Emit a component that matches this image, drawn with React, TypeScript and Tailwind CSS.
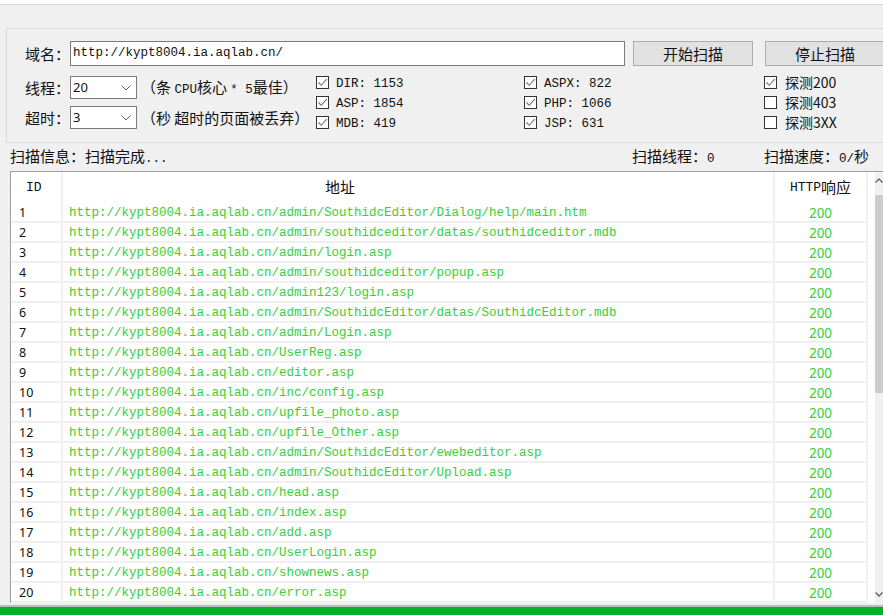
import React from "react";

const MONO = "font-['Liberation_Mono','Noto_Sans_CJK_SC',monospace]";
const CJK = "font-['Noto_Sans_CJK_SC','Noto_Sans',sans-serif]";

const urls = [
  "http://kypt8004.ia.aqlab.cn/admin/SouthidcEditor/Dialog/help/main.htm",
  "http://kypt8004.ia.aqlab.cn/admin/southidceditor/datas/southidceditor.mdb",
  "http://kypt8004.ia.aqlab.cn/admin/login.asp",
  "http://kypt8004.ia.aqlab.cn/admin/southidceditor/popup.asp",
  "http://kypt8004.ia.aqlab.cn/admin123/login.asp",
  "http://kypt8004.ia.aqlab.cn/admin/SouthidcEditor/datas/SouthidcEditor.mdb",
  "http://kypt8004.ia.aqlab.cn/admin/Login.asp",
  "http://kypt8004.ia.aqlab.cn/UserReg.asp",
  "http://kypt8004.ia.aqlab.cn/editor.asp",
  "http://kypt8004.ia.aqlab.cn/inc/config.asp",
  "http://kypt8004.ia.aqlab.cn/upfile_photo.asp",
  "http://kypt8004.ia.aqlab.cn/upfile_Other.asp",
  "http://kypt8004.ia.aqlab.cn/admin/SouthidcEditor/ewebeditor.asp",
  "http://kypt8004.ia.aqlab.cn/admin/SouthidcEditor/Upload.asp",
  "http://kypt8004.ia.aqlab.cn/head.asp",
  "http://kypt8004.ia.aqlab.cn/index.asp",
  "http://kypt8004.ia.aqlab.cn/add.asp",
  "http://kypt8004.ia.aqlab.cn/UserLogin.asp",
  "http://kypt8004.ia.aqlab.cn/shownews.asp",
  "http://kypt8004.ia.aqlab.cn/error.asp",
];

function Check({ checked, label, cjk }: { checked: boolean; label: string; cjk?: boolean }) {
  return (
    <div className="flex items-center h-[13px]">
      <div className="w-[13px] h-[13px] border border-[#333333] bg-white flex items-center justify-center shrink-0">
        {checked && (
          <svg width="11" height="11" viewBox="0 0 11 11">
            <polyline points="1.5,5.5 4.2,8.3 9.8,2.2" fill="none" stroke="#707070" strokeWidth="1.1" />
          </svg>
        )}
      </div>
      <span
        className={
          cjk
            ? `ml-[8px] text-[14px] leading-[13px] text-[#111] ${CJK}`
            : `ml-[7px] text-[12.5px] leading-[13px] text-[#111] translate-y-[2px] ${MONO}`
        }
      >
        {label}
      </span>
    </div>
  );
}

function Select({ value }: { value: string }) {
  return (
    <div className="w-[67px] h-[23px] border border-[#7a7a7a] bg-white flex items-center justify-between pl-[2px] pr-[5px]">
      <span className="text-[13px] text-[#111] font-['Noto_Sans',sans-serif] leading-none">{value}</span>
      <svg width="10" height="6" viewBox="0 0 10 6">
        <polyline points="0.5,0.5 5,5 9.5,0.5" fill="none" stroke="#606060" strokeWidth="1" />
      </svg>
    </div>
  );
}

export default function App() {
  return (
    <div className="w-[883px] h-[615px] overflow-hidden bg-[#f0f0f0] text-[#111]">
      <div className="h-[5px] bg-white border-b border-[#d9d9d9]" />

      {/* settings group */}
      <div className="mt-[23px] ml-[6px] w-[900px] h-[115px] border border-[#dcdcdc] pt-[12px] pl-[18px]">
        <div className="flex items-center h-[25px]">
          <span className={`w-[45px] text-[15px] leading-none ${CJK}`}>域名：</span>
          <div className="w-[555px] h-[25px] border border-[#7a7a7a] bg-white flex items-center pl-[2px]">
            <span className={`text-[12.5px] leading-none ${MONO}`}>http://kypt8004.ia.aqlab.cn/</span>
          </div>
          <button className={`ml-[8px] w-[120px] h-[25px] bg-[#e1e1e1] border border-[#adadad] text-[15px] leading-none ${CJK}`}>
            开始扫描
          </button>
          <button className={`ml-[12px] w-[120px] h-[25px] bg-[#e1e1e1] border border-[#adadad] text-[15px] leading-none ${CJK}`}>
            停止扫描
          </button>
        </div>

        <div className="flex mt-[10px]">
          <div className="w-[291px] flex flex-col gap-[7px]">
            <div className="flex items-center h-[23px]">
              <span className={`w-[45px] text-[15px] leading-none ${CJK}`}>线程：</span>
              <Select value="20" />
              <span className={`ml-[4px] text-[15px] leading-none whitespace-nowrap ${CJK}`}>
                （条 <span className={`text-[12.5px] ${MONO}`}>CPU</span>核心 <span className={`text-[12.5px] ${MONO}`}>* 5</span>最佳）
              </span>
            </div>
            <div className="flex items-center h-[23px]">
              <span className={`w-[45px] text-[15px] leading-none ${CJK}`}>超时：</span>
              <Select value="3" />
              <span className={`ml-[4px] text-[15px] leading-none whitespace-nowrap ${CJK}`}>（秒 超时的页面被丢弃）</span>
            </div>
          </div>
          <div className="w-[208px] flex flex-col gap-[7px]">
            <Check checked label="DIR: 1153" />
            <Check checked label="ASP: 1854" />
            <Check checked label="MDB: 419" />
          </div>
          <div className="w-[240px] flex flex-col gap-[7px]">
            <Check checked label="ASPX: 822" />
            <Check checked label="PHP: 1066" />
            <Check checked label="JSP: 631" />
          </div>
          <div className="flex flex-col gap-[7px]">
            <Check checked cjk label="探测200" />
            <Check checked={false} cjk label="探测403" />
            <Check checked={false} cjk label="探测3XX" />
          </div>
        </div>
      </div>

      {/* status line */}
      <div className={`flex items-center h-[28px] pl-[10px] text-[15px] leading-none whitespace-nowrap ${CJK}`}>
        <span className="w-[622px]">
          扫描信息：扫描完成<span className={`text-[12.5px] ${MONO}`}>...</span>
        </span>
        <span className="w-[132px]">
          扫描线程：<span className={`text-[12.5px] ${MONO}`}>0</span>
        </span>
        <span>
          扫描速度：<span className={`text-[12.5px] ${MONO}`}>0/</span>秒
        </span>
      </div>

      {/* result table */}
      <div className="ml-[10px] h-[432px] border-l border-t border-[#a0a0a0] bg-white flex overflow-hidden">
        <div className="w-[857px] shrink-0">
          <div className="grid grid-cols-[52px_712px_93px] h-[31px]">
            <div className={`border-r-2 border-[#f0f0f0] flex items-center pl-[15px] text-[13px] ${MONO}`}>ID</div>
            <div className={`border-r-2 border-[#f0f0f0] flex items-center pl-[262px] text-[15px] ${CJK}`}>地址</div>
            <div className={`border-r-2 border-[#f0f0f0] flex items-center justify-center text-[15px] ${CJK}`}>
              <span className={`text-[13px] ${MONO}`}>HTTP</span>响应
            </div>
          </div>
          {urls.map((u, i) => (
            <div key={i} className="grid grid-cols-[52px_712px_93px] h-[20px] border-b-2 border-[#f0f0f0]">
              <div className="border-r-2 border-[#f0f0f0] flex items-center pl-[8px] text-[12.5px] font-['Noto_Sans',sans-serif] text-[#111]">
                {i + 1}
              </div>
              <div className={`border-r-2 border-[#f0f0f0] flex items-center pl-[6px] text-[12.5px] text-[#36cf36] whitespace-nowrap ${MONO}`}>
                {u}
              </div>
              <div className="border-r-2 border-[#f0f0f0] flex items-center justify-center text-[13.5px] text-[#36cf36] font-['Noto_Sans',sans-serif]">
                200
              </div>
            </div>
          ))}
        </div>
        {/* scrollbar */}
        <div className="flex-1 flex">
          <div className="w-[7px]" />
          <div className="flex-1 flex flex-col bg-[#f0f0f0]">
            <div className="h-[17px] flex items-center justify-center">
              <svg width="8" height="5" viewBox="0 0 8 5">
                <polyline points="0.5,4.5 4,1 7.5,4.5" fill="none" stroke="#606060" strokeWidth="1.3" />
              </svg>
            </div>
            <div className="mt-[6px] h-[198px] bg-[#cdcdcd]" />
            <div className="flex-1" />
            <div className="h-[17px] flex items-center justify-center">
              <svg width="8" height="5" viewBox="0 0 8 5">
                <polyline points="0.5,0.5 4,4 7.5,0.5" fill="none" stroke="#606060" strokeWidth="1.3" />
              </svg>
            </div>
          </div>
        </div>
      </div>

      {/* progress bar */}
      <div className="mt-[2px] h-[10px] border-t-2 border-[#bcbcbc] bg-[#06b025]" />
    </div>
  );
}
